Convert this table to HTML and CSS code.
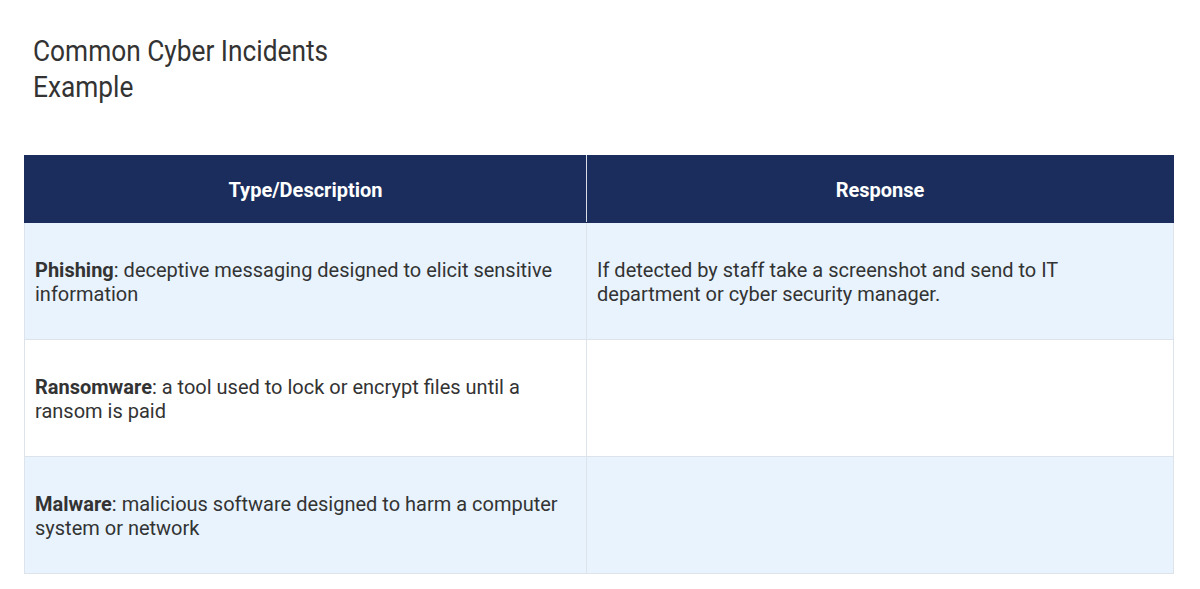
FILE: index.html
```html
<!DOCTYPE html>
<html lang="en">
<head>
<meta charset="utf-8">
<title>Common Cyber Incidents Example</title>
<link rel="stylesheet" href="styles.css">
</head>
<body>
<div class="page">
  <h1 class="title">Common Cyber Incidents<br>Example</h1>
  <table class="incidents">
    <thead>
      <tr>
        <th class="col-type">Type/Description</th>
        <th class="col-resp">Response</th>
      </tr>
    </thead>
    <tbody>
      <tr class="row-alt">
        <td><strong>Phishing</strong>: deceptive messaging designed to elicit sensitive information</td>
        <td>If detected by staff take a screenshot and send to IT department or cyber security manager.</td>
      </tr>
      <tr>
        <td><strong>Ransomware</strong>: a tool used to lock or encrypt files until a ransom is paid</td>
        <td></td>
      </tr>
      <tr class="row-alt">
        <td><strong>Malware</strong>: malicious software designed to harm a computer system or network</td>
        <td></td>
      </tr>
    </tbody>
  </table>
</div>
</body>
</html>
```

FILE: styles.css
```css
* { box-sizing: border-box; }
html, body { margin: 0; padding: 0; background: #ffffff; }
body {
  font-family: Roboto, "Liberation Sans", Arial, sans-serif;
  color: #333333;
}
.page {
  padding: 33px 26px 0 24px;
}
.title {
  margin: 0 0 50px 9px;
  font-weight: 400;
  font-size: 30px;
  line-height: 36px;
  color: #333333;
  transform: scaleX(0.876);
  transform-origin: left top;
}
.incidents {
  width: 1150px;
  border-collapse: collapse;
  table-layout: fixed;
  font-size: 20px;
  line-height: 24px;
}
.incidents th {
  background: #1a2d5c;
  color: #ffffff;
  font-weight: 700;
  height: 67px;
  padding: 2px 10px 0;
  text-align: center;
  border: 1px solid #1a2d5c;
  border-right-color: #d9dee6;
}
.incidents th:last-child { border-right-color: #1a2d5c; }
.incidents .col-type { width: 562px; }
.incidents td {
  height: 117px;
  padding: 2px 10px 0;
  vertical-align: middle;
  border: 1px solid #dde3ea;
  background: #ffffff;
}
.incidents .row-alt td { background: #e8f3fe; }
.incidents strong { font-weight: 700; }
```
